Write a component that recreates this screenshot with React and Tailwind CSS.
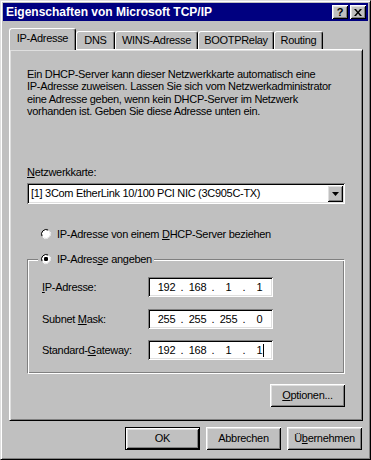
const raised = "shadow-[inset_1px_1px_#fff,inset_-1px_-1px_#000,inset_2px_2px_#dfdfdf,inset_-2px_-2px_#808080]";
const sunken = "shadow-[inset_1px_1px_#808080,inset_-1px_-1px_#fff,inset_2px_2px_#000,inset_-2px_-2px_#dfdfdf]";

function Button({ children, isDefault, className = "" }) {
  return (
    <div
      className={`w-[75px] h-[23px] flex items-center justify-center bg-[#c0c0c0] ${
        isDefault ? "border border-black " : ""
      }${raised} ${className}`}
    >
      {children}
    </div>
  );
}

function Radio({ checked }) {
  return (
    <svg width="12" height="12" viewBox="0 0 12 12" className="shrink-0">
      {/* outer ring: grey top-left, white bottom-right */}
      <path d="M8 1.5 A5.5 5.5 0 0 0 1.5 8" fill="none" stroke="#808080" />
      <path d="M4 10.5 A5.5 5.5 0 0 0 10.5 4" fill="none" stroke="#fff" />
      <circle cx="6" cy="6" r="4.5" fill="#fff" />
      <path d="M8.2 2.1 A4.5 4.5 0 0 0 2.1 8.2" fill="none" stroke="#000" />
      <path d="M3.8 9.9 A4.5 4.5 0 0 0 9.9 3.8" fill="none" stroke="#dfdfdf" />
      {checked && <rect x="4" y="4" width="4" height="4" rx="1.2" fill="#000" />}
    </svg>
  );
}

function Tab({ children, active, w }) {
  if (active) {
    return (
      <div
        className={`${w} h-[22px] -mb-[1px] relative z-10 bg-[#c0c0c0] flex items-center justify-center pb-[3px] rounded-t-[3px] border-t border-l border-r border-t-white border-l-white border-r-black shadow-[inset_-1px_0_#808080]`}
      >
        {children}
      </div>
    );
  }
  return (
    <div
      className={`${w} h-[18px] bg-[#c0c0c0] flex items-center justify-center rounded-t-[3px] border-t border-l border-r border-t-white border-l-white border-r-black shadow-[inset_-1px_0_#808080]`}
    >
      {children}
    </div>
  );
}

function IpField({ parts, cursor }) {
  return (
    <div className={`w-[125px] h-[20px] bg-white flex items-center pl-[5px] ${sunken}`}>
      {parts.map((p, i) => (
        <div key={i} className="flex items-center shrink-0">
          <span className="w-[27px] text-center relative">
            {p}
            {cursor && i === 3 && (
              <span className="absolute left-[17px] top-[0px] w-[1px] h-[13px] bg-black"></span>
            )}
          </span>
          {i < 3 && <span className="w-[4px] text-center">.</span>}
        </div>
      ))}
    </div>
  );
}

export default function App() {
  return (
    <div
      className="w-[371px] h-[460px] bg-[#c0c0c0] border border-t-[#dfdfdf] border-l-[#dfdfdf] border-r-black border-b-black shadow-[inset_1px_1px_#fff,inset_-1px_-1px_#808080] p-[2px] text-[11px] leading-[13px] tracking-[-0.3px] text-black select-none"
      style={{ fontFamily: '"Liberation Sans", Arial, sans-serif' }}
    >
      {/* title bar */}
      <div className="h-[18px] bg-[#000080] flex items-center pl-[3px] pr-[2px]">
        <span className="text-white font-bold text-[12px] tracking-[0px] grow">
          Eigenschaften von Microsoft TCP/IP
        </span>
        <div className={`w-[16px] h-[14px] bg-[#c0c0c0] flex items-center justify-center font-bold text-[11px] tracking-normal ${raised}`}>
          ?
        </div>
        <div className={`w-[16px] h-[14px] ml-[2px] bg-[#c0c0c0] flex items-center justify-center ${raised}`}>
          <svg width="8" height="7" viewBox="0 0 8 7">
            <path d="M0 0h2l2 2.5 2-2.5h2L5 3.5 8 7H6L4 4.5 2 7H0l3-3.5z" fill="#000" />
          </svg>
        </div>
      </div>

      {/* tabs */}
      <div className="flex items-end h-[21px] mt-[7px] ml-[6px]">
        <Tab active w="w-[67px]">IP-Adresse</Tab>
        <Tab w="w-[39px]">DNS</Tab>
        <Tab w="w-[83px]">WINS-Adresse</Tab>
        <Tab w="w-[76px]">BOOTPRelay</Tab>
        <Tab w="w-[49px]">Routing</Tab>
      </div>

      {/* panel */}
      <div className="ml-[6px] mr-[5px] h-[372px] border border-t-white border-l-white border-r-black border-b-black shadow-[inset_1px_1px_#dfdfdf,inset_-1px_-1px_#808080] px-[17px] pt-[18px]">
        <p className="leading-[12.3px] whitespace-nowrap">
          Ein DHCP-Server kann dieser Netzwerkkarte automatisch eine
          <br />
          IP-Adresse zuweisen. Lassen Sie sich vom Netzwerkadministrator
          <br />
          eine Adresse geben, wenn kein DHCP-Server im Netzwerk
          <br />
          vorhanden ist. Geben Sie diese Adresse unten ein.
        </p>

        <div className="mt-[49px]">
          <span className="underline">N</span>etzwerkkarte:
        </div>
        <div className={`mt-[4px] h-[21px] bg-white flex items-center pl-[4px] pr-[2px] ${sunken}`}>
          <span className="grow">[1] 3Com EtherLink 10/100 PCI NIC (3C905C-TX)</span>
          <div className={`w-[16px] h-[17px] bg-[#c0c0c0] flex items-center justify-center ${raised}`}>
            <svg width="7" height="4" viewBox="0 0 7 4">
              <path d="M0 0h7L3.5 4z" fill="#000" />
            </svg>
          </div>
        </div>

        <div className="mt-[22px] h-[16px] flex items-center gap-[5px] pl-[13px]">
          <Radio />
          <span>
            IP-Adresse von einem <span className="underline">D</span>HCP-Server beziehen
          </span>
        </div>

        {/* group box */}
        <div className="relative mt-[17px] h-[115px] border border-t-[#808080] border-l-[#808080] border-b-white border-r-white shadow-[inset_1px_1px_#fff,inset_-1px_-1px_#808080] pl-[14px] pt-[17px]">
          <div className="absolute left-[10px] -top-[9px] h-[16px] flex items-center gap-[5px] px-[2px] bg-[#c0c0c0]">
            <Radio checked />
            <span>
              IP-Adres<span className="underline">s</span>e angeben
            </span>
          </div>

          <div className="flex items-center h-[20px]">
            <span className="w-[106px]">
              <span className="underline">I</span>P-Adresse:
            </span>
            <IpField parts={["192", "168", "1", "1"]} />
          </div>
          <div className="flex items-center h-[20px] mt-[12px]">
            <span className="w-[106px]">
              Subnet <span className="underline">M</span>ask:
            </span>
            <IpField parts={["255", "255", "255", "0"]} />
          </div>
          <div className="flex items-center h-[20px] mt-[11px]">
            <span className="w-[106px]">
              Standard-<span className="underline">G</span>ateway:
            </span>
            <IpField parts={["192", "168", "1", "1"]} cursor />
          </div>
        </div>

        <div className="flex justify-end mt-[10px]">
          <Button>
            <span>
              <span className="underline">O</span>ptionen...
            </span>
          </Button>
        </div>
      </div>

      {/* dialog buttons */}
      <div className="flex justify-end gap-[6px] mt-[6px] mr-[6px]">
        <Button isDefault>OK</Button>
        <Button>Abbrechen</Button>
        <Button>
          <span>
            Ü<span className="underline">b</span>ernehmen
          </span>
        </Button>
      </div>
    </div>
  );
}
